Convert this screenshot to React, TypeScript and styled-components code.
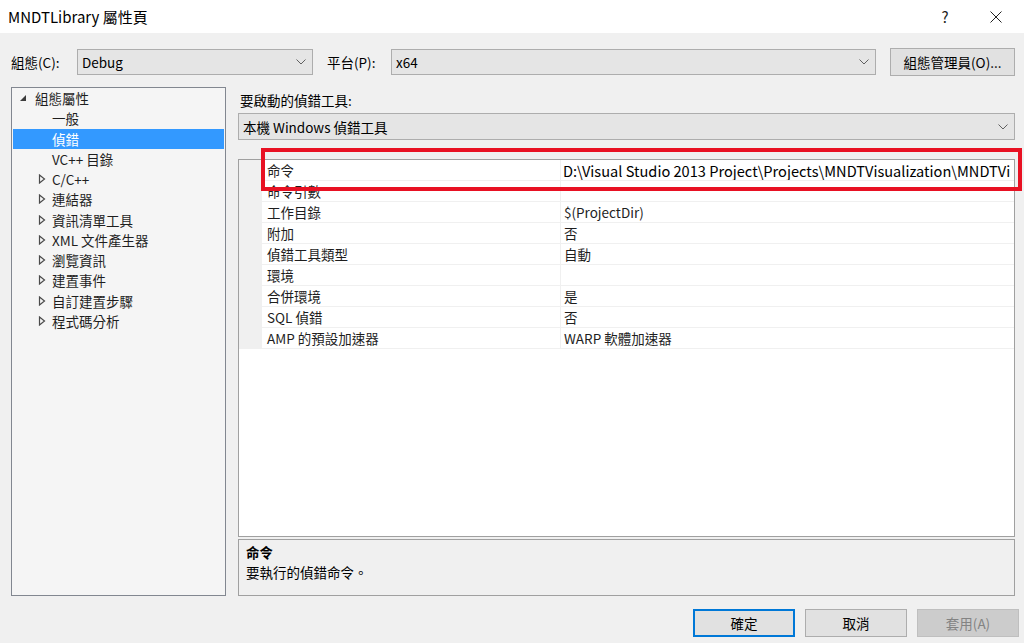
import React from 'react';
import styled, { createGlobalStyle } from 'styled-components';

const FONT = `"Segoe UI", "Noto Sans CJK TC", sans-serif`;

const GlobalStyle = createGlobalStyle`
	html, body {
		margin: 0;
		padding: 0;
		background: #f0f0f0;
		font-family: ${FONT};
	}
	* { box-sizing: border-box; }
`;

const treeItems = [
	{ label: '組態屬性', level: 0, kind: 'open' },
	{ label: '一般', level: 1, kind: 'leaf' },
	{ label: '偵錯', level: 1, kind: 'leaf', selected: true },
	{ label: 'VC++ 目錄', level: 1, kind: 'leaf' },
	{ label: 'C/C++', level: 1, kind: 'closed' },
	{ label: '連結器', level: 1, kind: 'closed' },
	{ label: '資訊清單工具', level: 1, kind: 'closed' },
	{ label: 'XML 文件產生器', level: 1, kind: 'closed' },
	{ label: '瀏覽資訊', level: 1, kind: 'closed' },
	{ label: '建置事件', level: 1, kind: 'closed' },
	{ label: '自訂建置步驟', level: 1, kind: 'closed' },
	{ label: '程式碼分析', level: 1, kind: 'closed' },
];

const props = [
	{ name: '命令', value: 'D:\\Visual Studio 2013 Project\\Projects\\MNDTVisualization\\MNDTVi', edit: true },
	{ name: '命令引數', value: '' },
	{ name: '工作目錄', value: '$(ProjectDir)' },
	{ name: '附加', value: '否' },
	{ name: '偵錯工具類型', value: '自動' },
	{ name: '環境', value: '' },
	{ name: '合併環境', value: '是' },
	{ name: 'SQL 偵錯', value: '否' },
	{ name: 'AMP 的預設加速器', value: 'WARP 軟體加速器' },
];

const Chevron = () => (
	<svg width="10" height="6" viewBox="0 0 10 6">
		<path d="M0.5 0.5 L5 5 L9.5 0.5" fill="none" stroke="#606060" strokeWidth="1" />
	</svg>
);

const Expander = ({ kind }: { kind: string }) => {
	if (kind === 'open')
		return (
			<svg width="8" height="8" viewBox="0 0 8 8">
				<path d="M7 1 L7 7 L1 7 Z" fill="#3c3c3c" />
			</svg>
		);
	if (kind === 'closed')
		return (
			<svg width="8" height="10" viewBox="0 0 8 10">
				<path d="M1.5 1 L6.5 5 L1.5 9 Z" fill="none" stroke="#4a4a4a" strokeWidth="1.2" />
			</svg>
		);
	return null;
};

export default function App() {
	return (
		<Window>
			<GlobalStyle />
			<TitleBar>
				<Title>MNDTLibrary 屬性頁</Title>
				<TitleButton>?</TitleButton>
				<TitleButton>
					<svg width="12" height="12" viewBox="0 0 12 12">
						<path d="M0.5 0.5 L11.5 11.5 M11.5 0.5 L0.5 11.5" stroke="#222" strokeWidth="1" />
					</svg>
				</TitleButton>
			</TitleBar>

			<Body>
				<ConfigRow>
					<FieldLabel $width={66}>組態(C):</FieldLabel>
					<Combo $width={236}>
						<span>Debug</span>
						<Chevron />
					</Combo>
					<FieldLabel $width={64} style={{ marginLeft: 14 }}>平台(P):</FieldLabel>
					<Combo $grow>
						<span>x64</span>
						<Chevron />
					</Combo>
					<PushButton $width={125} style={{ marginLeft: 14 }}>組態管理員(O)...</PushButton>
				</ConfigRow>

				<Main>
					<Tree>
						{treeItems.map((t) => (
							<TreeRow key={t.label} $selected={!!t.selected}>
								<ExpanderBox $level={t.level}>
									<Expander kind={t.kind} />
								</ExpanderBox>
								<span>{t.label}</span>
							</TreeRow>
						))}
					</Tree>

					<RightPane>
						<SectionLabel>要啟動的偵錯工具:</SectionLabel>
						<Combo $grow={false} $height={27}>
							<span>本機 Windows 偵錯工具</span>
							<Chevron />
						</Combo>

						<Grid>
							{props.map((p) => (
								<GridRow key={p.name}>
									<Gutter />
									<NameCell>{p.name}</NameCell>
									<ValueCell $edit={!!p.edit}>{p.value}</ValueCell>
								</GridRow>
							))}
							<GridFill />
						</Grid>

						<Description>
							<DescTitle>命令</DescTitle>
							<DescText>要執行的偵錯命令。</DescText>
						</Description>
					</RightPane>
				</Main>

				<Footer>
					<PushButton $width={102} $default>確定</PushButton>
					<PushButton $width={102}>取消</PushButton>
					<PushButton $width={102} $disabled>套用(A)</PushButton>
				</Footer>
			</Body>

			<Highlight />
		</Window>
	);
}

const Window = styled.div`
	position: relative;
	width: 1024px;
	height: 643px;
	overflow: hidden;
	background: #f0f0f0;
	color: #000;
	font-size: 13.5px;
	display: flex;
	flex-direction: column;
`;

const TitleBar = styled.div`
	height: 33px;
	background: #fff;
	display: flex;
	align-items: center;
	padding-left: 8px;
`;

const Title = styled.div`
	flex: 1;
	font-size: 15px;
	color: #000;
`;

const TitleButton = styled.div`
	width: 46px;
	height: 33px;
	display: flex;
	align-items: center;
	justify-content: center;
	font-size: 15px;
	color: #222;
	margin-right: 5px;
`;

const Body = styled.div`
	flex: 1;
	display: flex;
	flex-direction: column;
	padding: 0 9px 0 11px;
`;

const ConfigRow = styled.div`
	display: flex;
	align-items: center;
	height: 28px;
	margin-top: 15px;
`;

const FieldLabel = styled.div<{ $width: number }>`
	width: ${(p) => p.$width}px;
	flex-shrink: 0;
`;

const Combo = styled.div<{ $width?: number; $grow?: boolean; $height?: number }>`
	${(p) => (p.$width ? `width: ${p.$width}px;` : '')}
	${(p) => (p.$grow ? 'flex: 1;' : '')}
	height: ${(p) => p.$height || 26}px;
	background: #e5e5e5;
	border: 1px solid #adadad;
	display: flex;
	align-items: center;
	justify-content: space-between;
	padding: 0 6px 0 4px;
	font-size: 13.5px;
`;

const PushButton = styled.div<{ $width: number; $default?: boolean; $disabled?: boolean }>`
	width: ${(p) => p.$width}px;
	height: 28px;
	flex-shrink: 0;
	display: flex;
	align-items: center;
	justify-content: center;
	background: ${(p) => (p.$disabled ? '#cccccc' : '#e1e1e1')};
	border: ${(p) => (p.$default ? '2px solid #0078d7' : p.$disabled ? '1px solid #bfbfbf' : '1px solid #adadad')};
	color: ${(p) => (p.$disabled ? '#838383' : '#000')};
	font-size: 13.5px;
`;

const Main = styled.div`
	display: flex;
	margin-top: 11px;
	height: 509px;
`;

const Tree = styled.div`
	width: 215px;
	flex-shrink: 0;
	border: 1px solid #828790;
	background: #f5f5f5;
	padding: 0 1px;
`;

const TreeRow = styled.div<{ $selected: boolean }>`
	height: 20.25px;
	display: flex;
	align-items: center;
	background: ${(p) => (p.$selected ? '#3399ff' : 'transparent')};
	color: ${(p) => (p.$selected ? '#fff' : '#1e1e1e')};
	white-space: nowrap;
`;

const ExpanderBox = styled.div<{ $level: number }>`
	width: ${(p) => 22 + p.$level * 17}px;
	flex-shrink: 0;
	display: flex;
	justify-content: flex-end;
	align-items: center;
	padding-right: ${(p) => (p.$level === 0 ? 8 : 6)}px;
`;

const RightPane = styled.div`
	flex: 1;
	margin-left: 12px;
	display: flex;
	flex-direction: column;
`;

const SectionLabel = styled.div`
	height: 26px;
	padding-left: 2px;
	display: flex;
	align-items: center;
	margin-bottom: 0;
`;

const Grid = styled.div`
	margin-top: 19px;
	height: 378px;
	border: 1px solid #a0a0a0;
	background: #fff;
	display: flex;
	flex-direction: column;
`;

const GridRow = styled.div`
	height: 21px;
	display: flex;
	flex-shrink: 0;
`;

const Gutter = styled.div`
	width: 23px;
	background: #f0f0f0;
`;

const NameCell = styled.div`
	width: 299px;
	padding-left: 5px;
	display: flex;
	align-items: center;
	border-bottom: 1px solid #f0f0f0;
	border-right: 1px solid #f0f0f0;
	color: #1e1e1e;
`;

const ValueCell = styled.div<{ $edit: boolean }>`
	flex: 1;
	padding-left: ${(p) => (p.$edit ? 2 : 3)}px;
	display: flex;
	align-items: center;
	border-bottom: 1px solid #f0f0f0;
	white-space: nowrap;
	overflow: hidden;
	font-size: ${(p) => (p.$edit ? 14.6 : 13.5)}px;
	color: ${(p) => (p.$edit ? '#000' : '#1e1e1e')};
`;

const GridFill = styled.div`
	flex: 1;
`;

const Description = styled.div`
	margin-top: 2px;
	flex: 1;
	border: 1px solid #a0a0a0;
	background: #f0f0f0;
	padding: 2px 7px;
`;

const DescTitle = styled.div`
	font-weight: bold;
	height: 20px;
	line-height: 20px;
`;

const DescText = styled.div`
	height: 21px;
	line-height: 21px;
`;

const Footer = styled.div`
	display: flex;
	justify-content: flex-end;
	gap: 10px;
	margin-top: 13px;
	margin-right: -4px;
`;

const Highlight = styled.div`
	position: absolute;
	left: 261px;
	top: 148px;
	width: 761px;
	height: 43px;
	border: 4px solid #e81123;
	pointer-events: none;
`;
